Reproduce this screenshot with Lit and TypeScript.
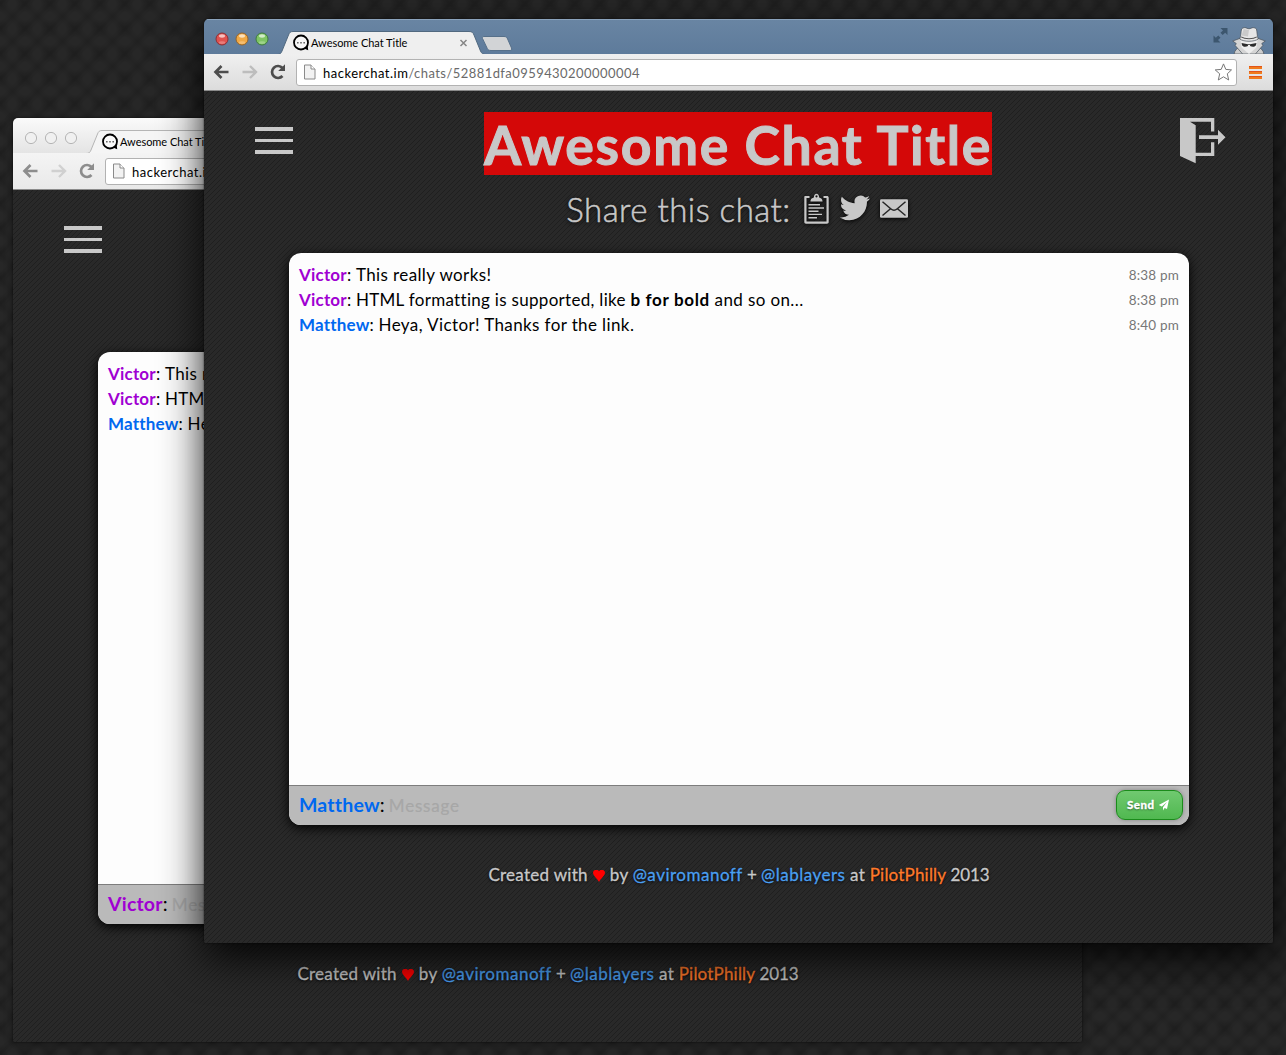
import { LitElement, html, css, svg, nothing } from "lit";
import { customElement, property } from "lit/decorators.js";

interface ChatMessage {
  author: string;
  tone: "violet" | "blue";
  body: unknown;
  time: string;
}

const MESSAGES: ChatMessage[] = [
  { author: "Victor", tone: "violet", body: "This really works!", time: "8:38 pm" },
  {
    author: "Victor",
    tone: "violet",
    body: html`<span class="tight">HTML formatting is supported, like </span><b>b for bold</b> and so on...`,
    time: "8:38 pm",
  },
  { author: "Matthew", tone: "blue", body: "Heya, Victor! Thanks for the link.", time: "8:40 pm" },
];

@customElement("browser-window")
class BrowserWindow extends LitElement {
  @property({ type: Boolean, reflect: true }) active = false;
  @property() user = "";
  @property() tone = "blue";

  static styles = css`
    :host {
      display: flex;
      flex-direction: column;
      width: 1069px;
      height: 924px;
      box-sizing: border-box;
      border-radius: 5px 5px 2px 2px;
      font-family: Lato, "Liberation Sans", sans-serif;
      background: #282828;
      overflow: hidden;
      box-shadow: 0 0 2px rgba(0, 0, 0, 0.6), 0 2px 8px rgba(0, 0, 0, 0.4);
    }
    :host([active]) {
      box-shadow: 0 0 2px rgba(0, 0, 0, 0.7), 0 15px 42px rgba(0, 0, 0, 0.9);
    }
    .titlebar {
      position: relative;
      display: flex;
      height: 35px;
      flex: none;
      background: linear-gradient(#fafafa, #e4e4e4);
    }
    :host([active]) .titlebar {
      background: linear-gradient(#6985a3, #5e7b9b);
      box-shadow: inset 0 1px 0 #8ba3bc;
    }
    .strip {
      position: absolute;
      left: 0;
      top: 0;
    }
    .lights {
      display: flex;
      gap: 6px;
      padding: 12.5px 0 0 11px;
      width: 78px;
      box-sizing: border-box;
    }
    .tab {
      position: relative;
      display: flex;
      align-items: center;
      width: 177px;
      height: 24px;
      margin: 12px 0 0 11px;
    }
    .favicon {
      flex: none;
    }
    .tabtitle {
      flex: 1;
      margin: -2px 0 0 1px;
      font-size: 11px;
      letter-spacing: -0.03px;
      color: #000;
      white-space: nowrap;
    }
    .right {
      position: relative;
      display: flex;
      gap: 4px;
      margin-left: auto;
      padding: 8px 7px 0 0;
    }
    .toolbar {
      display: flex;
      align-items: center;
      height: 37px;
      flex: none;
      box-sizing: border-box;
      border-bottom: 1px solid #8b8b8b;
      padding-left: 9px;
      background: linear-gradient(#f0f0f0, #dcdcdc);
    }
    :host(:not([active])) .toolbar {
      background: linear-gradient(#f4f4f4, #e9e9e9);
    }
    .nav {
      flex: none;
      opacity: 0.6;
    }
    :host([active]) .nav {
      opacity: 1;
    }
    .address {
      display: flex;
      align-items: center;
      width: 941px;
      height: 27px;
      box-sizing: border-box;
      margin-left: 8px;
      border: 1px solid #b2b2b2;
      border-radius: 3px;
      background: #fff;
      padding: 0 4px 0 6px;
    }
    .url {
      flex: 1;
      margin: 2px 0 0 7px;
      font-size: 13px;
      letter-spacing: 0.44px;
      color: #6a6a6a;
      white-space: nowrap;
    }
    .host {
      color: #000;
      letter-spacing: 0.5px;
    }
    .menu {
      margin-left: 12px;
    }
    .page {
      display: flex;
      flex-direction: column;
      align-items: center;
      flex: 1;
      padding-left: 1px;
      color: #c8c8c8;
      background: url("data:image/svg+xml,%3Csvg xmlns='http://www.w3.org/2000/svg' width='5' height='5' shape-rendering='crispEdges'%3E%3Cpath fill='%231f1f1f' d='M0 4h1v1H0zM1 3h1v1H1zM2 2h1v1H2zM3 1h1v1H3zM4 0h1v1H4z'/%3E%3C/svg%3E")
        #292929;
    }
    .head {
      display: flex;
      justify-content: space-between;
      align-items: flex-start;
      width: 970px;
      height: 84px;
      padding-top: 20px;
      box-sizing: border-box;
      margin-right: -2px;
    }
    .burger {
      display: flex;
      flex-direction: column;
      gap: 8px;
      width: 38px;
      margin-top: 16px;
    }
    .burger i {
      height: 3.6px;
      background: #c8c8c8;
    }
    .title {
      margin: 1px 0 0 3px;
      height: 63px;
      line-height: 64px;
      font-size: 53.5px;
      font-weight: 700;
      letter-spacing: 1.66px;
      -webkit-text-stroke: 1px #c8c8c8;
      color: #c8c8c8;
      background: #d40808;
      white-space: nowrap;
    }
    .exit {
      margin: 7px -1px 0 0;
    }
    .share {
      display: flex;
      align-items: center;
      height: 44px;
      margin-top: 11px;
      font-size: 33px;
      font-weight: 300;
      letter-spacing: 0.48px;
      text-shadow: 0 1px 4px #000;
      white-space: nowrap;
    }
    .sharetext {
      margin-top: 1px;
      -webkit-text-stroke: 0.5px #c8c8c8;
    }
    .share svg {
      margin: 0 0 0 12px;
      filter: drop-shadow(0 1px 2px #000);
    }
    .chat {
      display: flex;
      flex-direction: column;
      width: 900px;
      height: 572px;
      margin-top: 23px;
      border-radius: 12px;
      overflow: hidden;
      background: #fdfdfd;
      box-shadow: 0 3px 12px #000;
    }
    .list {
      flex: 1;
      padding: 9px 10px 0;
      font-size: 17px;
      letter-spacing: 0.39px;
      color: #000;
    }
    .row {
      display: flex;
      height: 25px;
      line-height: 25px;
      white-space: pre;
    }
    .name {
      letter-spacing: 0.2px;
    }
    .tight {
      letter-spacing: 0.3px;
    }
    b {
      letter-spacing: 0.66px;
    }
    .time {
      margin: 1px 0 0 auto;
      font-size: 13.5px;
      letter-spacing: 0.18px;
      color: #777;
    }
    .violet {
      color: #a000d2;
      font-weight: 700;
    }
    .blue {
      color: #0068f0;
      font-weight: 700;
    }
    .entry {
      display: flex;
      align-items: center;
      height: 40px;
      box-sizing: border-box;
      border-top: 1px solid #7d7d7d;
      padding: 0 6px 2px 10px;
      background: #bababa;
      font-size: 17px;
      color: #000;
      white-space: pre;
    }
    .who {
      font-size: 19.5px;
      letter-spacing: 0.2px;
    }
    .hint {
      margin: 1px 0 0 4px;
      color: #a7a7a7;
      letter-spacing: 0.8px;
      -webkit-text-stroke: 0.2px #a7a7a7;
    }
    .send {
      display: flex;
      align-items: center;
      gap: 3px;
      width: 67px;
      height: 30px;
      box-sizing: border-box;
      margin-left: auto;
      padding-left: 10px;
      border: 1px solid #1b8b1b;
      border-radius: 9px;
      background: linear-gradient(#70c970, #50b850);
      box-shadow: 0 0 4px rgba(0, 0, 0, 0.3);
      color: #fff;
      font-size: 11.5px;
      font-weight: 900;
      letter-spacing: 0.5px;
      -webkit-text-stroke: 0.3px #fff;
      text-shadow: 0 1px 2px rgba(0, 0, 0, 0.5);
    }
    .foot {
      display: flex;
      margin-top: 38px;
      line-height: 24px;
      font-size: 17px;
      letter-spacing: 0.28px;
      -webkit-text-stroke: 0.3px currentColor;
      text-shadow: 0 1px 3px #000;
      white-space: pre;
    }
    .heart {
      margin: 7px 5px 0;
    }
    .link {
      color: #4a9ff0;
      letter-spacing: 0.5px;
      -webkit-text-stroke-color: #4a9ff0;
    }
    .snug {
      letter-spacing: -0.1px;
    }
    .pilot {
      color: #ff7a2a;
      letter-spacing: 0.2px;
      -webkit-text-stroke-color: #ff7a2a;
    }
  `;

  private light(color: string, edge: string) {
    return html`<svg width="14" height="14" viewBox="0 0 14 14">
      ${this.active
        ? svg`<circle cx="7" cy="7" r="6" fill=${color} stroke=${edge}/>
            <ellipse cx="7" cy="4" rx="3" ry="1.7" fill="#fff" opacity=".65"/>
            <ellipse cx="7" cy="10.6" rx="3.2" ry="1.4" fill="#fff" opacity=".25"/>`
        : svg`<circle cx="7" cy="7" r="5.6" fill="#f0f0f0" stroke="#b5b5b5"/>`}
    </svg>`;
  }

  render() {
    const on = this.active;
    return html`
      <div class="titlebar">
        <svg class="strip" width="1069" height="35" viewBox="0 0 1069 35">
          <path
            d="M-2 35.500H73C76 35.500 77 34.500 78 32L84.500 16C85.500 13.500 86.500 12.500 89 12.500H265C268 12.500 269 13.500 270 16L276.500 32C277.500 34.500 279 35.500 282 35.500H1071V38H-2Z"
            fill=${on ? "#efefef" : "#f5f5f5"}
            stroke=${on ? "#51697f" : "#b5b5b5"}
          />
          <path
            d="M280 17.500H300C302 17.500 303 18.300 303.600 20L307.500 29C308 30.700 307.500 31.500 306 31.500H287C285 31.500 284 31 283.300 29.500L278.500 19.500C278 18.200 278.500 17.500 280 17.500Z"
            fill="#d2d4d6"
            stroke=${on ? "#56708a" : "#b5b5b5"}
          />
        </svg>
        <div class="lights">
          ${this.light("#e0524f", "#8c2f35")} ${this.light("#f0a945", "#94642c")} ${this.light("#7fc564", "#3f7a41")}
        </div>
        <div class="tab">
          <svg class="favicon" width="17" height="18" viewBox="0 0 17 18">
            <circle cx="8" cy="8.500" r="7" fill="#fff" fill-opacity=".5" stroke="#000" stroke-width="1.800" />
            <path d="M11 14.500L15.200 16.300L14.600 11.500Z" fill="#000" />
            <path d="M4 8h1.600v1.500H4zM7.200 8H8.800v1.500H7.200zM10.400 8h1.600v1.500h-1.600z" fill="#666" />
          </svg>
          <span class="tabtitle">Awesome Chat Title</span>
          <svg width="11" height="10" viewBox="0 0 11 10">
            <path d="M1.500 2l6 6M7.500 2l-6 6" stroke="#858585" stroke-width="1.500" />
          </svg>
        </div>
        ${on
          ? html`<div class="right">
              <svg width="15" height="16" viewBox="0 0 15 16">
                <path
                  d="M7.500 1H14.500V8L12.200 5.700L9.700 8L7.500 5.800L10 3.500ZM.5 8.500L2.800 10.800L5.300 8.500L7.500 10.700L5 13L7.500 15.500H.5Z"
                  fill="#3c566e"
                />
              </svg>
              <svg width="34" height="27" viewBox="0 0 32 27" preserveAspectRatio="none">
                <path d="M2 27C2.500 23 5 21 8 20L11 27ZM30 27C29.500 23 27 21 24 20L21 27Z" fill="#cdcdcd" stroke="#4a525b" stroke-width=".7" />
                <path d="M8.500 11L.7 14L4 16.500L3 18.500L10 27H22L29 18.500L28 16.500L31.300 14L23.500 11Z" fill="#d4d4d4" stroke="#4a525b" stroke-width=".7" />
                <path d="M8 13H24L23 20.500L16 27L9 20.500Z" fill="#ededed" />
                <path d="M7.300 12C8.500 9 8.300 5 9 2C10.500 .3 12.500 .4 14 1.200C15.300 1.900 16.700 1.900 18 1.200C19.500 .4 21.500 .3 23 2C23.700 5 23.500 9 24.700 12C21 15 11 15 7.300 12Z" fill="#e6e6e6" stroke="#4a525b" stroke-width=".7" />
                <path d="M11 2L16 3L15 9.500L9 8.500Z" fill="#cacaca" />
                <path d="M8.600 9.800C12 12.300 20 12.300 23.400 9.800" fill="none" stroke="#555" stroke-width="1" />
                <path d="M9 16L15 17.200V19C13 20.300 10 20.100 9.400 18ZM23 16L17 17.200V19C19 20.300 22 20.100 22.600 18ZM15 17.200H17V18H15Z" fill="#2b2b2b" />
              </svg>
            </div>`
          : nothing}
      </div>
      <div class="toolbar">
        <svg class="nav" width="75" height="20" viewBox="0 0 75 20">
          <path d="M15.500 10H3M8.500 4L2.500 10L8.500 16" fill="none" stroke="#4d4d4d" stroke-width="2.700" />
          <path d="M29.500 10H42M37 4L43 10L37 16" fill="none" stroke="#bdbdbd" stroke-width="2.400" />
          <path d="M69.500 14A6 6 0 1 1 69.500 6" fill="none" stroke="#4d4d4d" stroke-width="2.700" />
          <path d="M72 2.200V9H65.200Z" fill="#4d4d4d" />
        </svg>
        <div class="address">
          <svg width="13" height="16" viewBox="0 0 13 16">
            <path d="M1.500 1H8L12 5V15H1.500Z" fill="#f2f2f2" stroke="#8a8a8a" />
            <path d="M8 1V5H12" fill="#fff" stroke="#8a8a8a" />
          </svg>
          <span class="url"><span class="host">hackerchat.im</span>/chats/52881dfa0959430200000004</span>
          <svg width="18" height="18" viewBox="0 0 18 18">
            <path
              d="M9.500 .9L11.800 6.400L17.500 6.900L13.300 10.800L14.700 17L9.500 13.800L4.300 17L5.700 10.800L1.200 6.900L7.200 6.400Z"
              fill="#fff"
              stroke="#777"
              stroke-linejoin="round"
            />
          </svg>
        </div>
        <svg class="menu" width="13" height="13" viewBox="0 0 13 13">
          <path d="M0 0h13v3H0zM0 5h13v3H0zM0 10h13v3H0z" fill="#f07b1c" />
          <path d="M0 0h13v1H0zM0 5h13v1H0zM0 10h13v1H0z" fill="#e2541a" />
        </svg>
      </div>
      <div class="page">
        <div class="head">
          <div class="burger"><i></i><i></i><i></i></div>
          <div class="title">Awesome Chat Title</div>
          <svg class="exit" width="46" height="46" viewBox="0 0 46 46">
            <path
              fill="#c8c8c8"
              fill-rule="evenodd"
              d="M0 0H34.300V13.500H31V3.700H10L15.700 7.300V34.700H31V24.300H34.300V38H15.700V45.300L0 38ZM19 17.300H38V11.700L45.500 19.200L38 26.700V21H19Z"
            />
          </svg>
        </div>
        <div class="share">
          <span class="sharetext">Share this chat:</span>
          <svg width="109" height="36" viewBox="0 0 109 36" fill="#c8c8c8">
            <path
              d="M2 6H6.500V8H3.500V31.500H23.500V8H20.500V6H24C25 6 25.700 6.700 25.700 7.700V32C25.700 33 25 33.700 24 33.700H3C2 33.700 1.300 33 1.300 32V7.700C1.300 6.700 1.500 6 2 6Z"
            />
            <path fill-rule="evenodd" d="M7.500 11.500C7.500 8.500 9.500 8 10.800 7.500C11 5 12 3.800 13.500 3.800C15 3.800 16 5 16.200 7.500C17.500 8 19.500 8.500 19.500 11.500ZM13.500 5.200a1.100 1.100 0 1 0 .01 0Z" />
            <path d="M5.500 14H17V15.400H5.500ZM5.500 17.300H21V18.700H5.500ZM5.500 20.500H15.500V21.900H5.500ZM5.500 23.700H19V25.100H5.500ZM5.500 27H14V28.400H5.500Z" />
            <path
              transform="translate(36.800 2.800) scale(1.260)"
              d="M23.950 4.570a10 10 0 0 1-2.820.77 4.960 4.960 0 0 0 2.160-2.720c-.95.560-2 .960-3.130 1.180a4.920 4.920 0 0 0-8.380 4.480C7.690 8.090 4.070 6.130 1.640 3.160a4.820 4.820 0 0 0-.67 2.480c0 1.710.87 3.210 2.190 4.100a4.900 4.900 0 0 1-2.230-.62v.06a4.920 4.920 0 0 0 3.950 4.830 5 5 0 0 1-2.210.080 4.940 4.940 0 0 0 4.600 3.420A9.870 9.870 0 0 1 0 19.540a14 14 0 0 0 7.550 2.210c9.050 0 14-7.500 14-13.980 0-.210 0-.420-.020-.630a9.940 9.940 0 0 0 2.460-2.550z"
            />
            <rect x="77" y="9.300" width="28" height="18.500" rx="1.300" />
            <path d="M79.500 11.800L88 19Q91 21.500 94 19L102.500 11.800M79.500 25.500L87.500 18.800M102.500 25.500L94.500 18.800" fill="none" stroke="#262626" stroke-width="1.500" />
          </svg>
        </div>
        <div class="chat">
          <div class="list">
            ${MESSAGES.map(
              (m) => html`<div class="row"><span class="name"><span class=${m.tone}>${m.author}</span>: </span><span>${m.body}</span><span class="time">${m.time}</span></div>`,
            )}
          </div>
          <div class="entry">
            <span class="who"><span class=${this.tone}>${this.user}</span>:</span><span class="hint">Message</span>
            <div class="send">
              <span>Send</span>
              <svg width="12" height="12" viewBox="0 0 12 12">
                <path d="M11 .5L.8 6L3.800 7.500L9 3L5 8.200V11.500L6.600 9L9 10Z" fill="#fff" />
              </svg>
            </div>
          </div>
        </div>
        <div class="foot">
          <span>Created with</span><svg class="heart" width="12" height="12" viewBox="0 0 12 12"><path d="M6 12C4.500 8.500 0 6 0 2.500A3.200 2.800 0 0 1 6 1.200A3.200 2.800 0 0 1 12 2.500C12 6 7.500 8.500 6 12Z" fill="#f00" /></svg><span>by </span><span class="link">@aviromanoff</span><span class="snug"> + </span><span class="link">@lablayers</span><span> at </span><span class="pilot">PilotPhilly</span><span class="snug"> 2013</span>
        </div>
      </div>
    `;
  }
}

@customElement("app-root")
class AppRoot extends LitElement {
  static styles = css`
    :host {
      position: relative;
      display: block;
      width: 1286px;
      height: 1055px;
      overflow: hidden;
      background: radial-gradient(circle at 50% 50%, rgba(0, 0, 0, 0.16), transparent 55%) 12px 16px / 25px 25px,
        linear-gradient(135deg, transparent 34%, rgba(0, 0, 0, 0.1) 50%, transparent 66%) 0 4px / 25px 25px,
        linear-gradient(45deg, transparent 34%, rgba(0, 0, 0, 0.08) 50%, transparent 66%) 0 4px / 25px 25px, #272727;
    }
    .back,
    .front {
      position: absolute;
    }
    .back {
      left: 13px;
      top: 118px;
    }
    .front {
      left: 204px;
      top: 19px;
    }
  `;
  render() {
    return html`
      <browser-window class="back" user="Victor" tone="violet"></browser-window>
      <browser-window class="front" active user="Matthew" tone="blue"></browser-window>
    `;
  }
}
